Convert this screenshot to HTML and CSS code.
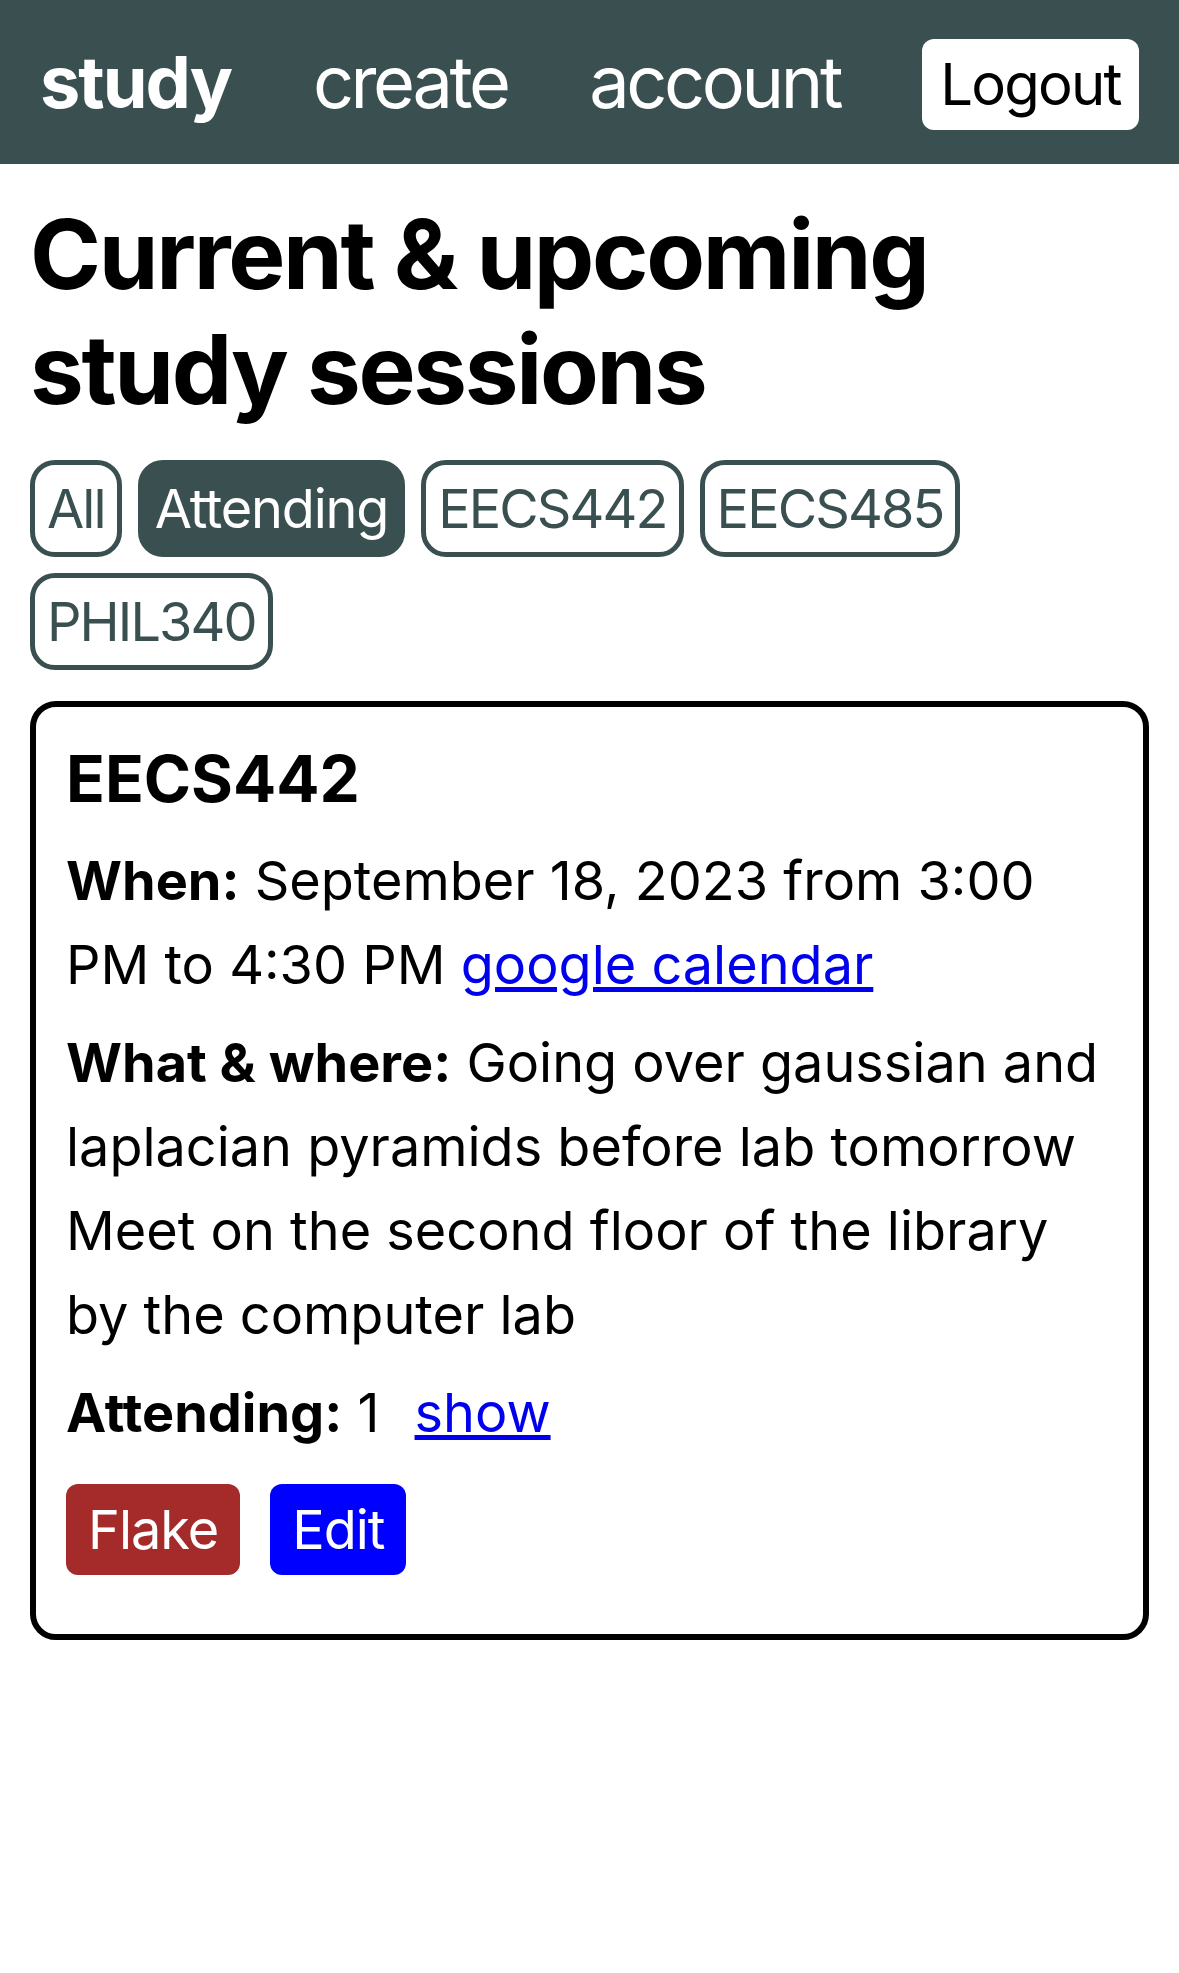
FILE: index.html
```html
<!DOCTYPE html>
<html lang="en">
<head>
<meta charset="utf-8">
<title>Study sessions</title>
<link rel="stylesheet" href="styles.css">
</head>
<body>
<nav class="nav">
  <a class="nav-link brand" href="#">study</a>
  <a class="nav-link" href="#">create</a>
  <a class="nav-link" href="#">account</a>
  <button class="logout">Logout</button>
</nav>
<main class="main">
  <h1 class="title">Current &amp; upcoming study sessions</h1>
  <div class="filters">
    <span class="chip">All</span>
    <span class="chip active">Attending</span>
    <span class="chip">EECS442</span>
    <span class="chip">EECS485</span>
    <span class="chip">PHIL340</span>
  </div>
  <section class="card">
    <h3 class="card-title">EECS442</h3>
    <p class="row"><b>When:</b> September 18, 2023 from 3:00 PM to 4:30 PM <a class="link" href="#">google calendar</a></p>
    <p class="row"><b>What &amp; where:</b> Going over gaussian and laplacian pyramids before lab tomorrow Meet on the second floor of the library by the computer lab</p>
    <p class="row"><b>Attending:</b> 1 <a class="link show" href="#">show</a></p>
    <div class="actions">
      <button class="btn flake">Flake</button>
      <button class="btn edit">Edit</button>
    </div>
  </section>
</main>
</body>
</html>
```
FILE: styles.css
```css
body {
  margin: 0;
  font-family: Inter, "Noto Sans", "Liberation Sans", sans-serif;
  color: #000;
  background: #fff;
}

.nav {
  height: 164px;
  background: #3a5050;
  display: flex;
  align-items: center;
  justify-content: space-between;
  padding: 0 40px 0 40px;
  box-sizing: border-box;
}

.nav-link {
  color: #fff;
  text-decoration: none;
  font-size: 72px;
  line-height: 1;
  letter-spacing: -3.4px;
}

.brand {
  font-weight: 700;
  letter-spacing: -2px;
}

.logout {
  width: 217px;
  height: 91px;
  background: #fff;
  color: #000;
  border: none;
  border-radius: 12px;
  font-family: inherit;
  font-size: 58px;
  letter-spacing: -1.8px;
  padding: 0;
  margin-top: 4px;
}

.main {
  padding: 0 30px;
}

.title {
  font-size: 96px;
  line-height: 115px;
  font-weight: 700;
  margin: 33px 0 33px;
  letter-spacing: -2.3px;
}

.filters {
  display: flex;
  flex-wrap: wrap;
  gap: 16px;
}

.chip {
  border: 5px solid #3a5050;
  border-radius: 25px;
  line-height: 87px;
  padding: 0 12px;
  font-size: 54px;
  letter-spacing: -1.9px;
  color: #3a5050;
}

.chip.active {
  background: #3a5050;
  color: #fff;
  letter-spacing: -1.2px;
}

.card {
  margin-top: 31px;
  border: 6px solid #000;
  border-radius: 26px;
  padding: 33px 30px 59px;
}

.card-title {
  font-size: 64px;
  line-height: 77px;
  font-weight: 700;
  margin: 0 0 22px;
}

.row {
  font-size: 54px;
  line-height: 84px;
  margin: 0 0 14px;
}

.link {
  color: #0000ee;
}

.show {
  margin-left: 20px;
}

.actions {
  display: flex;
  gap: 30px;
  margin-top: 29px;
}

.btn {
  height: 91px;
  padding: 0 22px;
  border: none;
  border-radius: 12px;
  color: #fff;
  font-family: inherit;
  font-size: 54px;
  letter-spacing: -1px;
}

.flake {
  background: #a52a2a;
}

.edit {
  background: #0000ff;
}
```
